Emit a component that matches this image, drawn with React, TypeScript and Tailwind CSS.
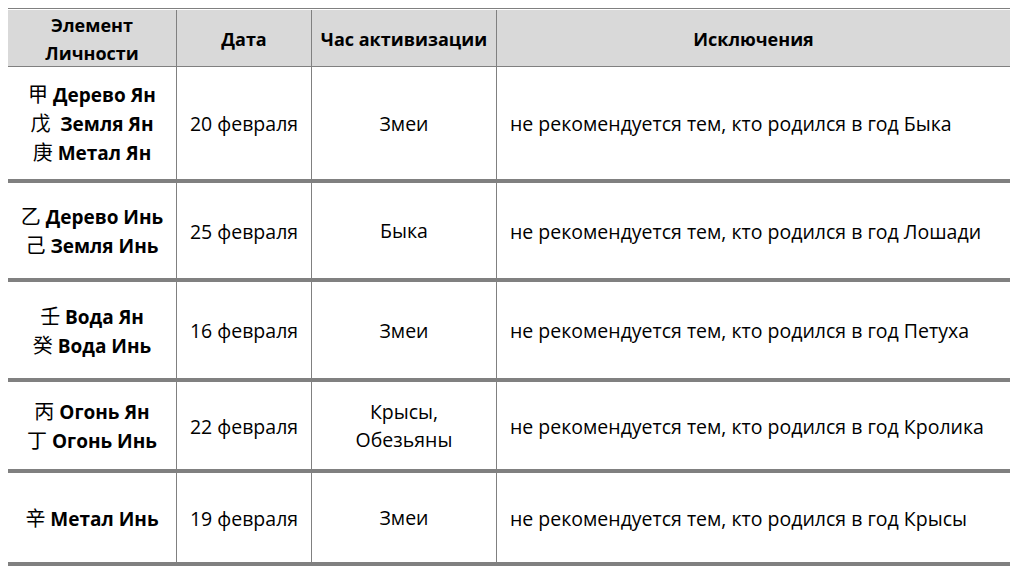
import React from "react";

type Row = {
  elements: { glyph: string; name: string }[];
  date: string;
  hour: React.ReactNode;
  exclusion: string;
  height: string;
};

const rows: Row[] = [
  {
    elements: [
      { glyph: "甲", name: "Дерево Ян" },
      { glyph: "戊", name: " Земля Ян" },
      { glyph: "庚", name: "Метал Ян" },
    ],
    date: "20 февраля",
    hour: "Змеи",
    exclusion: "не рекомендуется тем, кто родился в год Быка",
    height: "h-[116px]",
  },
  {
    elements: [
      { glyph: "乙", name: "Дерево Инь" },
      { glyph: "己", name: "Земля Инь" },
    ],
    date: "25 февраля",
    hour: "Быка",
    exclusion: "не рекомендуется тем, кто родился в год Лошади",
    height: "h-[99px]",
  },
  {
    elements: [
      { glyph: "壬", name: "Вода Ян" },
      { glyph: "癸", name: "Вода Инь" },
    ],
    date: "16 февраля",
    hour: "Змеи",
    exclusion: "не рекомендуется тем, кто родился в год Петуха",
    height: "h-[100px]",
  },
  {
    elements: [
      { glyph: "丙", name: "Огонь Ян" },
      { glyph: "丁", name: "Огонь Инь" },
    ],
    date: "22 февраля",
    hour: (
      <>
        Крысы,
        <br />
        Обезьяны
      </>
    ),
    exclusion: "не рекомендуется тем, кто родился в год Кролика",
    height: "h-[91px]",
  },
  {
    elements: [{ glyph: "辛", name: "Метал Инь" }],
    date: "19 февраля",
    hour: "Змеи",
    exclusion: "не рекомендуется тем, кто родился в год Крысы",
    height: "h-[93px]",
  },
];

const grid = "grid grid-cols-[169px_135px_185px_513px]";
const cell = "flex items-center justify-center border-r border-[#808080] text-center";

export default function App() {
  return (
    <div className="min-h-screen bg-white px-2 pt-2 font-['Open_Sans',sans-serif] text-[19.5px] leading-[29px] text-black">
      <div className="w-[1002px]">
        <div className="h-px bg-[#808080]" />
        <div className={`${grid} mt-px h-[57px] border-b border-[#808080] bg-[#d9d9d9] text-[18px] font-bold leading-[28px]`}>
          <div className={cell}>
            <div className="pt-px">
              Элемент
              <br />
              Личности
            </div>
          </div>
          <div className={cell}>Дата</div>
          <div className={cell}>Час активизации</div>
          <div className="flex items-center justify-center">Исключения</div>
        </div>

        {rows.map((r, i) => (
          <div key={i} className={`${grid} ${r.height} border-b-4 border-[#808080]`}>
            <div className={`${cell} flex-col pt-[3px] text-[19px] font-bold`}>
              {r.elements.map((e) => (
                <div key={e.glyph} className="h-[29px] whitespace-pre">
                  <span className="font-['Noto_Sans_CJK_SC',sans-serif] text-[20px] leading-none font-normal">{e.glyph}</span>
                  {" " + e.name}
                </div>
              ))}
            </div>
            <div className={`${cell} pt-px`}>{r.date}</div>
            <div className={`${cell} pt-px leading-[28px]`}>
              <div>{r.hour}</div>
            </div>
            <div className="flex items-center pt-px pl-[13px]">{r.exclusion}</div>
          </div>
        ))}
      </div>
    </div>
  );
}
